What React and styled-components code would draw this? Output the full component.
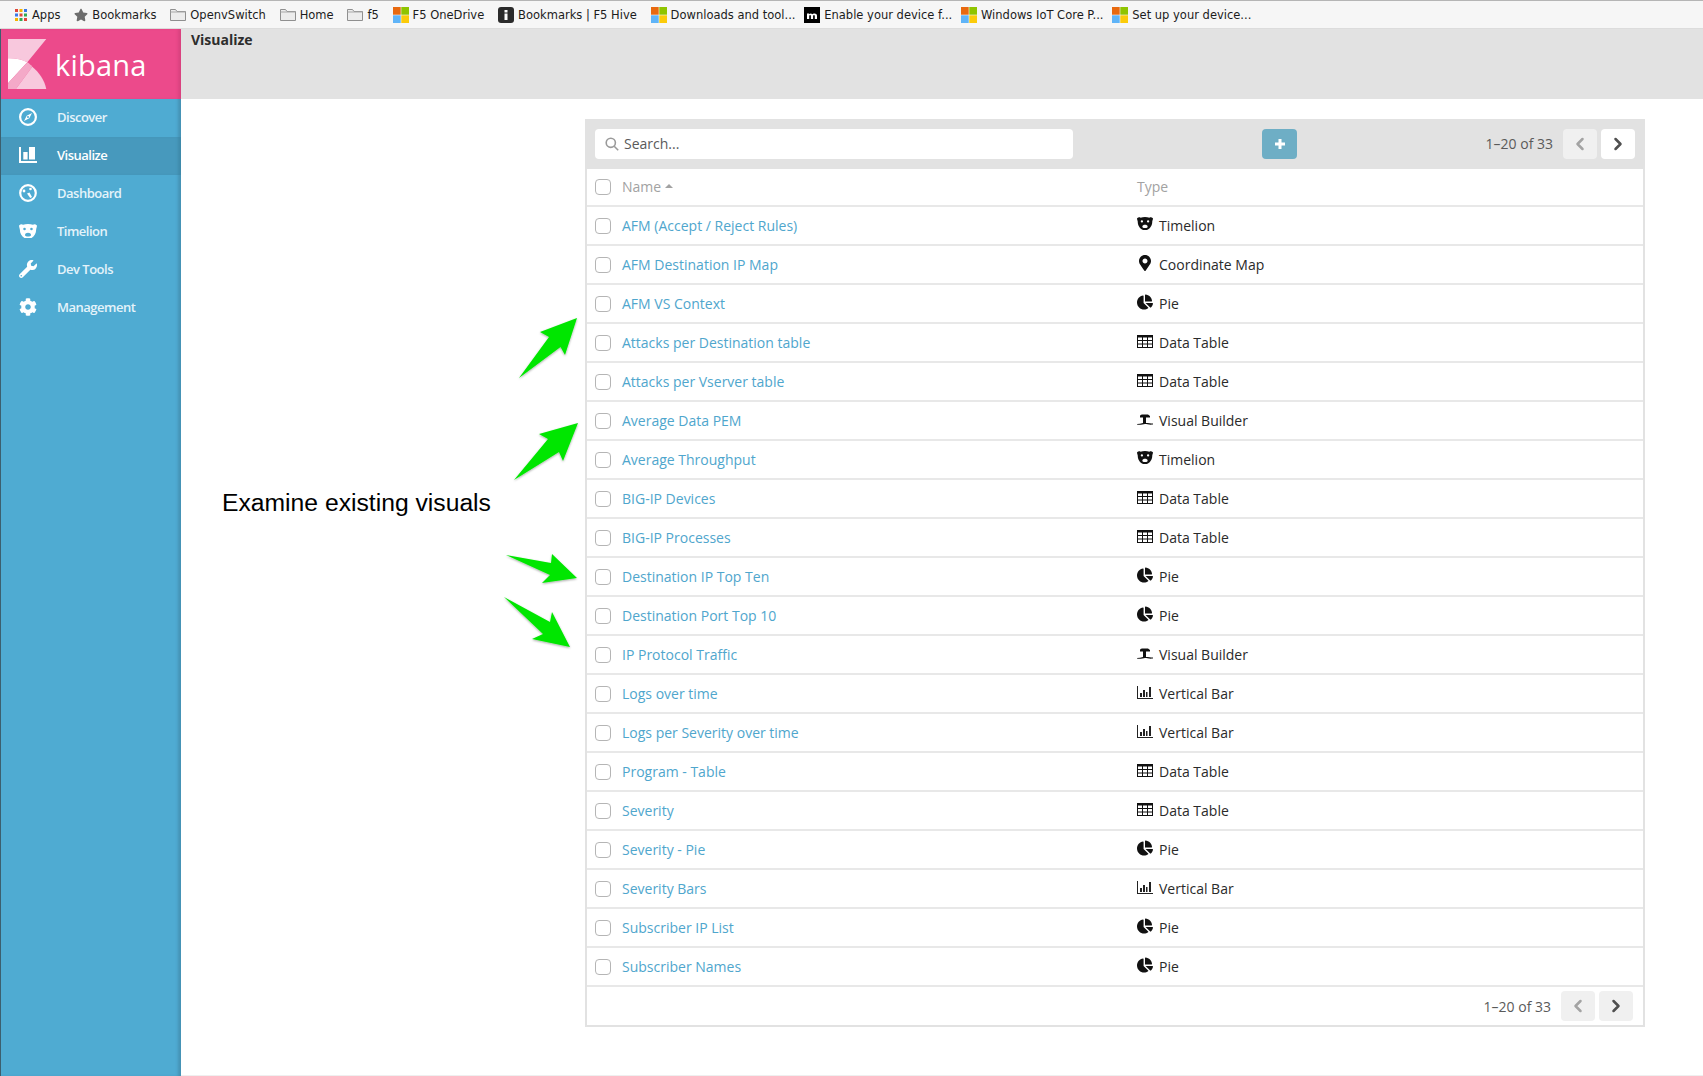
import React from 'react'
import styled, { createGlobalStyle } from 'styled-components'
import { FaWrench, FaCog, FaChartPie, FaMapMarkerAlt, FaStar } from 'react-icons/fa'
import { FiChevronLeft, FiChevronRight } from 'react-icons/fi'

const GlobalStyle = createGlobalStyle`
  html, body {
    margin: 0;
    padding: 0;
    background: #fff;
  }
  body {
    font-family: "Open Sans", "Liberation Sans", sans-serif;
  }
`

const Page = styled.div`
  position: relative;
  width: 1703px;
  height: 1076px;
  overflow: hidden;
  display: flex;
  flex-direction: column;
`

const BookmarkBar = styled.div`
  height: 29px;
  box-sizing: border-box;
  flex: none;
  display: flex;
  align-items: center;
  gap: 13.8px;
  padding: 0 0 0 14px;
  background: #f6f6f6;
  border-top: 1px solid #b5b5b5;
  border-bottom: 1px solid #dcdcdc;
`

const Bookmark = styled.div`
  display: flex;
  align-items: center;
  gap: 4px;
  margin-right: ${(p) => (p.$cut ? -5 : 0)}px;
  font-family: "DejaVu Sans", sans-serif;
  font-size: 11.5px;
  color: #1c1c1c;
  white-space: nowrap;
`

const Body = styled.div`
  flex: 1;
  display: flex;
  min-height: 0;
`

const Sidebar = styled.div`
  width: 181px;
  flex: none;
  box-sizing: border-box;
  border-left: 1px solid #3c5f6e;
  background: #4fabd2;
  box-shadow: inset -4px 0 3px -1px #4593b5;
  display: flex;
  flex-direction: column;
`

const Logo = styled.div`
  height: 70px;
  box-sizing: border-box;
  flex: none;
  background: #ec4a8b;
  box-shadow: inset -4px 0 3px -1px #d9437f;
  display: flex;
  align-items: center;
  gap: 8px;
  padding-left: 7px;
`

const LogoText = styled.span`
  font-family: "Open Sans", sans-serif;
  font-size: 29px;
  color: #fff;
  margin-top: 1px;
  letter-spacing: 0.2px;
`

const NavList = styled.div`
  display: flex;
  flex-direction: column;
`

const NavItem = styled.div`
  height: 38px;
  box-sizing: border-box;
  padding-bottom: 2px;
  display: flex;
  align-items: center;
  color: ${(p) => (p.$active ? '#ffffff' : '#e4f3fa')};
  background: ${(p) => (p.$active ? '#4799bd' : 'transparent')};
  box-shadow: ${(p) => (p.$active ? 'inset -4px 0 3px -1px #3f8aab' : 'none')};
  font-size: 13px;
  font-weight: 600;
  letter-spacing: -0.5px;
`

const NavIcon = styled.span`
  width: 56px;
  flex: none;
  display: flex;
  justify-content: center;
  padding-right: 3px;
  box-sizing: border-box;
  color: #fff;
  font-size: 18px;
`

const Main = styled.div`
  flex: 1;
  display: flex;
  flex-direction: column;
  min-width: 0;
  border-bottom: 1px solid #efefef;
`

const TopBar = styled.div`
  height: 70px;
  flex: none;
  box-sizing: border-box;
  background: #e2e2e2;
  padding: 1px 0 0 10px;
  font-size: 14px;
  font-weight: 700;
  color: #2d2d2d;
`

const Content = styled.div`
  flex: 1;
  display: flex;
  padding-top: 20px;
`

const Annotation = styled.div`
  width: 404px;
  flex: none;
  box-sizing: border-box;
  padding: 370px 0 0 41px;
  font-family: "Liberation Sans", Arial, sans-serif;
  font-size: 24.7px;
  line-height: 28px;
  color: #000;
`

const Panel = styled.div`
  width: 1060px;
  height: 908px;
  flex: none;
  box-sizing: border-box;
  border: 2px solid #e2e2e2;
  border-top: none;
  display: flex;
  flex-direction: column;
`

const Toolbar = styled.div`
  height: 50px;
  flex: none;
  box-sizing: border-box;
  margin: 0 -2px;
  padding: 0 10px 1px;
  background: #e2e2e2;
  display: flex;
  align-items: center;
`

const SearchBox = styled.div`
  width: 478px;
  height: 30px;
  flex: none;
  box-sizing: border-box;
  border-radius: 4px;
  background: #fff;
  display: flex;
  align-items: center;
  gap: 5px;
  padding-left: 10px;
  font-size: 14px;
  color: #5a5a5a;
`

const AddButton = styled.div`
  width: 35px;
  height: 30px;
  margin-left: 189px;
  flex: none;
  border-radius: 4px;
  background: #6eaec5;
  color: #fff;
  display: flex;
  align-items: center;
  justify-content: center;
`

const Pager = styled.div`
  margin-left: auto;
  display: flex;
  align-items: center;
  gap: 4px;
  font-size: 14px;
  color: #5a5a5a;
`

const PagerLabel = styled.span`
  margin-right: 6px;
`

const PageButton = styled.div`
  width: 34px;
  height: 30px;
  border-radius: 4px;
  display: flex;
  align-items: center;
  justify-content: center;
  background: ${(p) => (p.$muted ? '#f0f0f0' : '#fff')};
  color: ${(p) => (p.$faded ? '#a3a3a3' : '#4f4f4f')};
  font-size: 20px;
`

const Row = styled.div`
  height: ${(p) => (p.$head ? 38 : 39)}px;
  flex: none;
  box-sizing: border-box;
  display: grid;
  grid-template-columns: 27px 515px 1fr;
  align-items: center;
  padding-left: 8px;
  border-bottom: 2px solid #e8e8e8;
  font-size: 14px;
`

const Check = styled.span`
  width: 16px;
  height: 16px;
  box-sizing: border-box;
  border: 1px solid #b5b5b5;
  border-radius: 4px;
  background: #fff;
`

const HeadLabel = styled.span`
  color: #a2a2a2;
  display: flex;
  align-items: center;
  gap: 4px;
  margin-top: -2px;
`

const SortCaret = styled.i`
  width: 0;
  height: 0;
  border-left: 4px solid transparent;
  border-right: 4px solid transparent;
  border-bottom: 4px solid #a2a2a2;
`

const NameLink = styled.a`
  color: #4fa6cd;
  text-decoration: none;
`

const TypeCell = styled.span`
  display: flex;
  align-items: center;
  color: #2a2a2a;
`

const TypeIcon = styled.span`
  width: 22px;
  flex: none;
  height: 16px;
  margin-top: ${(p) => (p.$raised ? -4 : -2)}px;
  display: flex;
  align-items: center;
  justify-content: flex-start;
  color: #111;
  font-size: 16px;
`

const Footer = styled.div`
  flex: 1;
  display: flex;
  justify-content: flex-end;
  align-items: center;
  padding-right: 10px;
`

const ArrowLayer = styled.svg`
  position: absolute;
  left: 0;
  top: 0;
  pointer-events: none;
`

const AppsIcon = () => (
  <svg width="14" height="14" viewBox="0 0 14 14">
    {[1, 5.5, 10].map((y, r) =>
      [1, 5.5, 10].map((x, c) => (
        <rect
          key={`${r}${c}`}
          x={x}
          y={y}
          width="3"
          height="3"
          fill={[['#e0463a', '#f4b400', '#3b78e7'], ['#3b78e7', '#e0463a', '#34a853'], ['#f4b400', '#34a853', '#e0463a']][r][c]}
        />
      ))
    )}
  </svg>
)

const FolderIcon = () => (
  <svg width="16" height="14" viewBox="0 0 16 14">
    <path d="M.5 12.500v-11h5l1.500 2h8.500v9z" fill="#ececec" stroke="#8f8f8f" />
    <path d="M.5 4h15" stroke="#a8a8a8" />
  </svg>
)

const MsIcon = () => (
  <svg width="16" height="16" viewBox="0 0 16 16">
    <rect width="7.700" height="7.700" fill="#e8690f" />
    <rect x="8.300" width="7.700" height="7.700" fill="#8fc400" />
    <rect y="8.300" width="7.700" height="7.700" fill="#5fb4f8" />
    <rect x="8.300" y="8.300" width="7.700" height="7.700" fill="#fbcb0a" />
  </svg>
)

const HiveIcon = () => (
  <svg width="16" height="16" viewBox="0 0 16 16">
    <rect width="16" height="16" rx="3" fill="#2b2b2b" />
    <rect x="6.500" y="3" width="3" height="2.500" fill="#fff" />
    <rect x="6.500" y="6.500" width="3" height="6.500" fill="#fff" />
  </svg>
)

const MicroIcon = () => (
  <svg width="16" height="16" viewBox="0 0 16 16">
    <rect width="16" height="16" fill="#000" />
    <path d="M3 12V6.500h2.200v.8c1-1.200 2.400-1.200 3 0 1-1.200 4.800-1.600 4.800 1.500V12h-2.200V9c0-1.200-1.600-1.200-1.700 0v3H6.900V9c0-1.200-1.600-1.200-1.700 0v3z" fill="#fff" />
  </svg>
)

const KibanaMark = () => (
  <svg width="39" height="50.300" viewBox="0 0 39 50.300">
    <path d="M0 0H38.300L19.300 23.300C14 20.500 7 19 0 19.300Z" fill="#f8c8dd" />
    <path d="M0 19.300C7 19 14 20.500 19.300 23.300L0 44.300Z" fill="#fff" />
    <path d="M19.300 23.300C21 24.300 22.800 25.900 24.300 27.700L7.700 50.300H0V44.300Z" fill="#f4a9c8" />
    <path d="M24.300 27.700C31 33 37 42 38.300 50.300H7.700Z" fill="#f8c8dd" />
  </svg>
)

const CompassIcon = () => (
  <svg width="18" height="18" viewBox="0 0 18 18">
    <circle cx="9" cy="9" r="7.900" fill="none" stroke="#fff" strokeWidth="2.200" />
    <path d="M13 5L10.300 10.300 5 13 7.700 7.700zM9 8a1 1 0 100 2 1 1 0 000-2z" fill="#fff" fillRule="evenodd" />
  </svg>
)

const BarsIcon = () => (
  <svg width="18" height="16" viewBox="0 0 18 16" fill="#fff">
    <path d="M0 0h2v14h16v2H0z" />
    <rect x="4.300" y="5" width="4.300" height="7.500" />
    <rect x="10" y="0" width="6" height="12.500" />
  </svg>
)

const GaugeIcon = () => (
  <svg width="18" height="18" viewBox="0 0 18 18">
    <circle cx="9" cy="9" r="7.800" fill="none" stroke="#fff" strokeWidth="2.200" />
    <circle cx="5" cy="7" r="1.400" fill="#fff" />
    <circle cx="11.500" cy="5" r="1.300" fill="#fff" />
    <path d="M8 9.500l2.500-1 2.500 4.500-1.800 1z" fill="#fff" />
  </svg>
)

const BearIcon = ({ size = 18, color = '#fff', hole = '#4fabd2' }) => (
  <svg width={size} height={size * 0.83} viewBox="0 0 18 15">
    <path d="M0 1.500C1.500 0 3 0 4 .8c3-1 7-1 10 0C15 0 16.500 0 18 1.500c0 2-.8 3-.8 4 0 5-3.500 9.500-8.200 9.500S.8 10.500.8 5.500C.8 4.500 0 3.500 0 1.500z" fill={color} />
    <circle cx="5.500" cy="5" r="1.300" fill={hole} />
    <circle cx="12.500" cy="5" r="1.300" fill={hole} />
    <path d="M6 11c0-3 6-3 6 0 0 1-1 1.500-3 1.500S6 12 6 11z" fill={hole} />
  </svg>
)

const TableIcon = () => (
  <svg width="16" height="13" viewBox="0 0 16 13" fill="none" stroke="#111">
    <rect x=".5" y=".5" width="15" height="12" />
    <path d="M.5 1.500h15" strokeWidth="2" />
    <path d="M.5 5.500h15M.5 9h15M5.500 1v11M10.500 1v11" />
  </svg>
)

const BuilderIcon = () => (
  <svg width="16" height="12" viewBox="0 0 16 12" fill="#111">
    <path d="M3 2Q3 .5 5 .5H11L13 2V3.500H9V9c2 0 5 .5 7 .5v1C12 11 10 10 8 10S3 11.500 0 10.500V10c2 0 4-.5 6-1V3.500H3z" />
  </svg>
)

const VerticalBarIcon = () => (
  <svg width="16" height="13" viewBox="0 0 16 13" fill="#222">
    <path d="M0 0h1v12h16v1H0z" />
    <rect x="3" y="7" width="2" height="4" />
    <rect x="6" y="4" width="2" height="7" />
    <rect x="9" y="6" width="1.500" height="5" />
    <rect x="12" y="1" width="2" height="10" />
  </svg>
)

const typeIcons = {
  Timelion: { icon: <BearIcon size={16} color="#111" hole="#fff" />, raised: true },
  'Coordinate Map': { icon: <FaMapMarkerAlt />, raised: true },
  Pie: { icon: <FaChartPie />, raised: true },
  'Data Table': { icon: <TableIcon /> },
  'Visual Builder': { icon: <BuilderIcon /> },
  'Vertical Bar': { icon: <VerticalBarIcon /> },
}

const bookmarks = [
  { icon: <AppsIcon />, label: 'Apps' },
  { icon: <FaStar size={14} color="#6d6d6d" />, label: 'Bookmarks' },
  { icon: <FolderIcon />, label: 'OpenvSwitch' },
  { icon: <FolderIcon />, label: 'Home' },
  { icon: <FolderIcon />, label: 'f5' },
  { icon: <MsIcon />, label: 'F5 OneDrive' },
  { icon: <HiveIcon />, label: 'Bookmarks | F5 Hive' },
  { icon: <MsIcon />, label: 'Downloads and tool...', cut: true },
  { icon: <MicroIcon />, label: 'Enable your device f...', cut: true },
  { icon: <MsIcon />, label: 'Windows IoT Core P...', cut: true },
  { icon: <MsIcon />, label: 'Set up your device...' },
]

const navItems = [
  { icon: <CompassIcon />, label: 'Discover' },
  { icon: <BarsIcon />, label: 'Visualize', active: true },
  { icon: <GaugeIcon />, label: 'Dashboard' },
  { icon: <BearIcon />, label: 'Timelion' },
  { icon: <FaWrench />, label: 'Dev Tools' },
  { icon: <FaCog />, label: 'Management' },
]

const rows = [
  ['AFM (Accept / Reject Rules)', 'Timelion'],
  ['AFM Destination IP Map', 'Coordinate Map'],
  ['AFM VS Context', 'Pie'],
  ['Attacks per Destination table', 'Data Table'],
  ['Attacks per Vserver table', 'Data Table'],
  ['Average Data PEM', 'Visual Builder'],
  ['Average Throughput', 'Timelion'],
  ['BIG-IP Devices', 'Data Table'],
  ['BIG-IP Processes', 'Data Table'],
  ['Destination IP Top Ten', 'Pie'],
  ['Destination Port Top 10', 'Pie'],
  ['IP Protocol Traffic', 'Visual Builder'],
  ['Logs over time', 'Vertical Bar'],
  ['Logs per Severity over time', 'Vertical Bar'],
  ['Program - Table', 'Data Table'],
  ['Severity', 'Data Table'],
  ['Severity - Pie', 'Pie'],
  ['Severity Bars', 'Vertical Bar'],
  ['Subscriber IP List', 'Pie'],
  ['Subscriber Names', 'Pie'],
]

const arrows = [
  '577,318 565,355 560.500,347 519,378 549,337 540,332',
  '578,423 563,461 559,452 514,480 548,439 539,434',
  '577,578 542,583 550,575 506,555 551,563 552,554',
  '570,647 532,639 543,634 504,597 550,622 552,612',
]

function App() {
  return (
    <Page>
      <GlobalStyle />
      <BookmarkBar>
        {bookmarks.map((b, i) => (
          <Bookmark key={i} $cut={b.cut}>
            {b.icon}
            {b.label}
          </Bookmark>
        ))}
      </BookmarkBar>
      <Body>
        <Sidebar>
          <Logo>
            <KibanaMark />
            <LogoText>kibana</LogoText>
          </Logo>
          <NavList>
            {navItems.map((n) => (
              <NavItem key={n.label} $active={n.active}>
                <NavIcon>{n.icon}</NavIcon>
                {n.label}
              </NavItem>
            ))}
          </NavList>
        </Sidebar>
        <Main>
          <TopBar>Visualize</TopBar>
          <Content>
            <Annotation>Examine existing visuals</Annotation>
            <Panel>
              <Toolbar>
                <SearchBox>
                  <svg width="14" height="14" viewBox="0 0 14 14" fill="none" stroke="#9a9a9a" strokeWidth="1.600">
                    <circle cx="5.800" cy="5.800" r="4.600" />
                    <path d="M9.200 9.200l4 4" />
                  </svg>
                  Search...
                </SearchBox>
                <AddButton>
                  <svg width="12" height="12" viewBox="0 0 12 12" fill="#fff">
                    <path d="M4.500 1h3v3.500H11v3H7.500V11h-3V7.500H1v-3h3.500z" />
                  </svg>
                </AddButton>
                <Pager>
                  <PagerLabel>1–20 of 33</PagerLabel>
                  <PageButton $muted $faded>
                    <FiChevronLeft strokeWidth={3} />
                  </PageButton>
                  <PageButton>
                    <FiChevronRight strokeWidth={3} />
                  </PageButton>
                </Pager>
              </Toolbar>
              <Row $head>
                <Check />
                <HeadLabel>
                  Name
                  <SortCaret />
                </HeadLabel>
                <HeadLabel>Type</HeadLabel>
              </Row>
              {rows.map(([name, type]) => (
                <Row key={name}>
                  <Check />
                  <NameLink href="#">{name}</NameLink>
                  <TypeCell>
                    <TypeIcon $raised={typeIcons[type].raised}>{typeIcons[type].icon}</TypeIcon>
                    {type}
                  </TypeCell>
                </Row>
              ))}
              <Footer>
                <Pager>
                  <PagerLabel>1–20 of 33</PagerLabel>
                  <PageButton $muted $faded>
                    <FiChevronLeft strokeWidth={3} />
                  </PageButton>
                  <PageButton $muted>
                    <FiChevronRight strokeWidth={3} />
                  </PageButton>
                </Pager>
              </Footer>
            </Panel>
          </Content>
        </Main>
      </Body>
      <ArrowLayer width="1703" height="1076" viewBox="0 0 1703 1076">
        <defs>
          <filter id="arrowShadow" x="-20%" y="-20%" width="140%" height="140%">
            <feDropShadow dx="0" dy="1" stdDeviation="1" floodColor="#000" floodOpacity="0.35" />
          </filter>
        </defs>
        {arrows.map((pts) => (
          <polygon key={pts} points={pts} fill="#00e600" filter="url(#arrowShadow)" />
        ))}
      </ArrowLayer>
    </Page>
  )
}

export default App
